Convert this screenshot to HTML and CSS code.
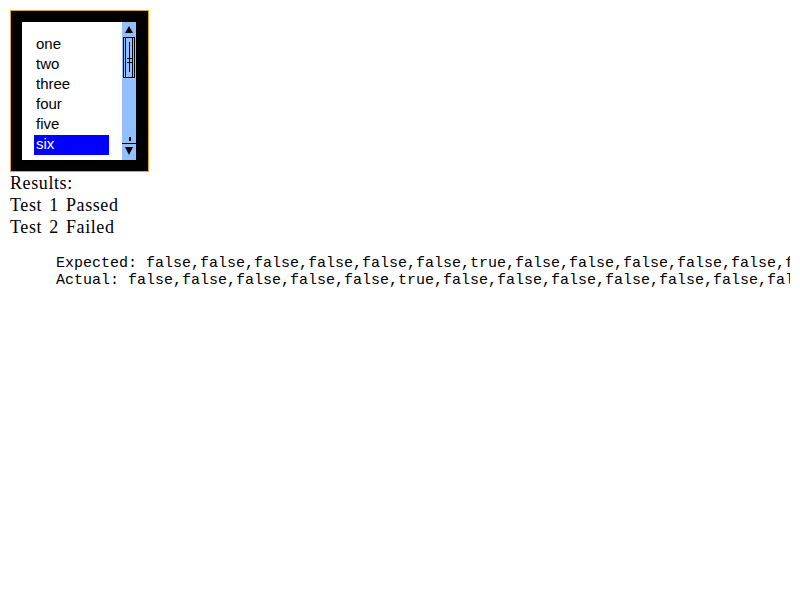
FILE: index.html
```html
<!DOCTYPE html>
<html>
<head>
<meta charset="utf-8">
<link rel="stylesheet" href="styles.css">
</head>
<body>
<div class="listbox">
  <ul class="options">
    <li class="option">one</li>
    <li class="option">two</li>
    <li class="option">three</li>
    <li class="option">four</li>
    <li class="option">five</li>
    <li class="option selected">six</li>
  </ul>
  <svg class="scrollbar" width="14" height="138" viewBox="0 0 14 138">
    <rect x="0" y="0" width="14" height="138" fill="#90c0ff"/>
    <polygon points="3,11 11,11 7,4" fill="#000"/>
    <rect x="1.5" y="15.5" width="11" height="40" fill="none" stroke="#000"/>
    <line x1="3.5" y1="16" x2="3.5" y2="55" stroke="#000"/>
    <line x1="10.5" y1="16" x2="10.5" y2="55" stroke="#000"/>
    <line x1="7.5" y1="20" x2="7.5" y2="50" stroke="#000"/>
    <line x1="5" y1="36.5" x2="10" y2="36.5" stroke="#000"/>
    <line x1="5" y1="40.5" x2="10" y2="40.5" stroke="#000"/>
    <rect x="7" y="115" width="2" height="4" fill="#000"/>
    <line x1="0" y1="121.5" x2="14" y2="121.5" stroke="#000"/>
    <polygon points="3,125 11,125 7,133" fill="#000"/>
  </svg>
</div>
<div class="results">
  <div>Results:</div>
  <div>Test 1 Passed</div>
  <div>Test 2 Failed</div>
</div>
<pre class="details">Expected: false,false,false,false,false,false,true,false,false,false,false,false,false,false,false,false,false,false,false,false
Actual: false,false,false,false,false,true,false,false,false,false,false,false,false,false,false,false,false,false,false,false</pre>
</body>
</html>
```

FILE: styles.css
```css
html {
  overflow: hidden;
}
body {
  margin: 10px;
  background: #fff;
  color: #000;
  font-family: "Liberation Serif", "Times New Roman", serif;
}
.listbox {
  display: flex;
  width: fit-content;
  border: 1px solid #e3a33b;
  padding: 11px 12px 11px 11px;
  background: #000;
}
.options {
  list-style: none;
  margin: 0;
  width: 100px;
  height: 138px;
  box-sizing: border-box;
  padding: 13px 13px 5px 12px;
  background: #fff;
  font-family: "Liberation Sans", Arial, sans-serif;
  font-size: 15px;
}
.option {
  height: 20px;
  line-height: 17px;
  padding-left: 2px;
}
.option.selected {
  background: #0000ff;
  color: #fff;
}
.scrollbar {
  display: block;
}
.results {
  font-size: 18px;
  line-height: 22px;
  letter-spacing: 0.6px;
  word-spacing: 2px;
}
.details {
  width: max-content;
  margin: 17px 0 0 46px;
  font-family: "Liberation Mono", "Courier New", monospace;
  font-size: 15px;
  line-height: 17px;
}
```
